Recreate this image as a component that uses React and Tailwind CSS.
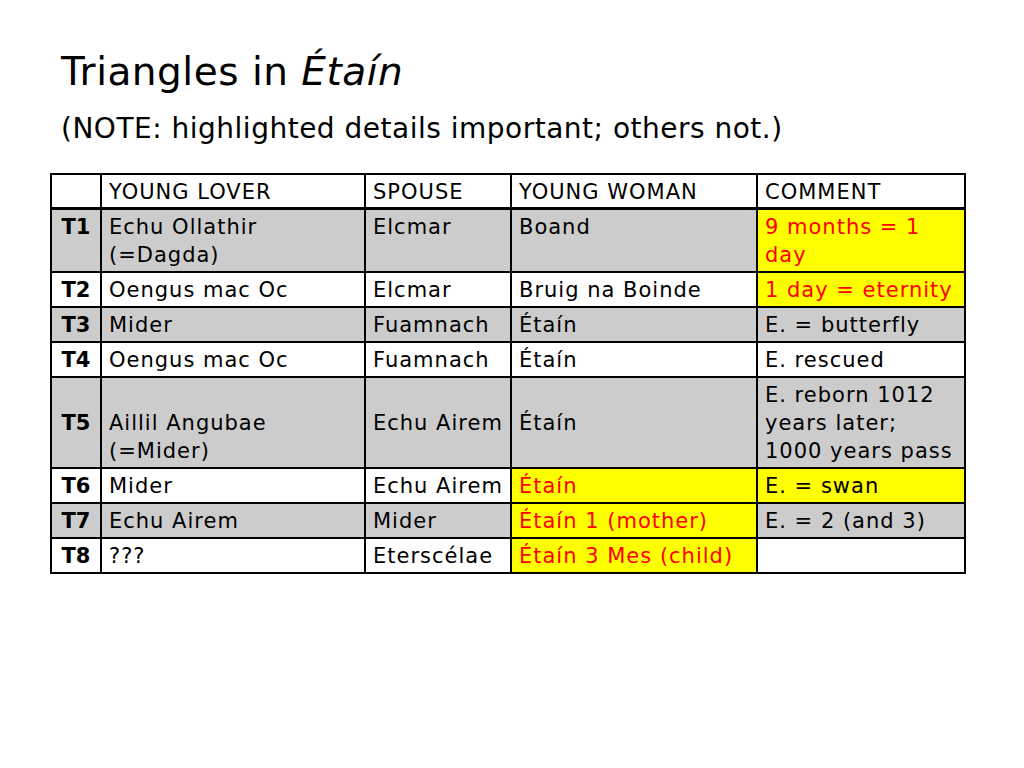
import React from "react";

const G = "bg-[#cccccc]";
const Y = "bg-[#ffff00] text-[#ff0000]";
const YB = "bg-[#ffff00] text-black";

const rows = [
  { id: "T1", bg: G, cells: [["Echu Ollathir", "(=Dagda)"], ["Elcmar"], ["Boand"], ["9 months = 1", "day"]], hl: { 3: Y } },
  { id: "T2", bg: "bg-white", cells: [["Oengus mac Oc"], ["Elcmar"], ["Bruig na Boinde"], ["1 day = eternity"]], hl: { 3: Y } },
  { id: "T3", bg: G, cells: [["Mider"], ["Fuamnach"], ["Étaín"], ["E. = butterfly"]], hl: {} },
  { id: "T4", bg: "bg-white", cells: [["Oengus mac Oc"], ["Fuamnach"], ["Étaín"], ["E. rescued"]], hl: {} },
  { id: "T6", bg: "bg-white", cells: [["Mider"], ["Echu Airem"], ["Étaín"], ["E. = swan"]], hl: { 2: Y, 3: YB } },
  { id: "T7", bg: G, cells: [["Echu Airem"], ["Mider"], ["Étaín 1 (mother)"], ["E. = 2 (and 3)"]], hl: { 2: Y } },
  { id: "T8", bg: "bg-white", cells: [["???"], ["Eterscélae"], ["Étaín 3 Mes (child)"], [""]], hl: { 2: Y } },
];

const td = "border-2 border-black px-[7px] pt-[3px] pb-[2px] align-top";
const th = "border-2 border-b-[3px] border-black px-[7px] pt-[3px] pb-[1px] align-top";

function Row({ r }) {
  return (
    <tr className={r.bg}>
      <td className={`${td} font-bold text-center tracking-normal`}>{r.id}</td>
      {r.cells.map((lines, i) => (
        <td key={i} className={`${td} ${r.hl[i] || ""}`}>
          {lines.map((l, j) => (
            <div key={j}>{l || "\u00a0"}</div>
          ))}
        </td>
      ))}
    </tr>
  );
}

export default function App() {
  return (
    <div
      className="w-[1024px] h-[768px] bg-white text-black"
      style={{ fontFamily: '"DejaVu Sans", Verdana, sans-serif' }}
    >
      <div className="pt-[48px] pl-[61px]">
        <h1 className="text-[39px] leading-[48px] tracking-[0.5px]">
          Triangles in <i>Étaín</i>
        </h1>
        <p className="text-[28px] leading-[40px] mt-[13px] tracking-[0.5px]">
          (NOTE: highlighted details important; others not.)
        </p>
      </div>
      <div className="pl-[50px] pt-[24px]">
        <table className="border-collapse text-[21px] leading-[28px] tracking-[1px] w-[914px] table-fixed">
          <colgroup>
            <col className="w-[50px]" />
            <col className="w-[264px]" />
            <col className="w-[146px]" />
            <col className="w-[246px]" />
            <col className="w-[208px]" />
          </colgroup>
          <tbody>
            <tr className="bg-white">
              <td className={th}></td>
              <td className={th}>YOUNG LOVER</td>
              <td className={th}>SPOUSE</td>
              <td className={th}>YOUNG WOMAN</td>
              <td className={th}>COMMENT</td>
            </tr>
            {rows.slice(0, 4).map((r) => (
              <Row key={r.id} r={r} />
            ))}
            <tr className={G}>
              <td className="border-2 border-black px-[7px] align-middle font-bold text-center tracking-normal">T5</td>
              <td className="border-2 border-black px-[7px] pt-[31px] pb-[2px] align-top">
                <div>Aillil Angubae</div>
                <div>(=Mider)</div>
              </td>
              <td className="border-2 border-black px-[7px] align-middle">Echu Airem</td>
              <td className="border-2 border-black px-[7px] align-middle">Étaín</td>
              <td className={td}>
                <div>E. reborn 1012</div>
                <div>years later;</div>
                <div>1000 years pass</div>
              </td>
            </tr>
            {rows.slice(4).map((r) => (
              <Row key={r.id} r={r} />
            ))}
          </tbody>
        </table>
      </div>
    </div>
  );
}
